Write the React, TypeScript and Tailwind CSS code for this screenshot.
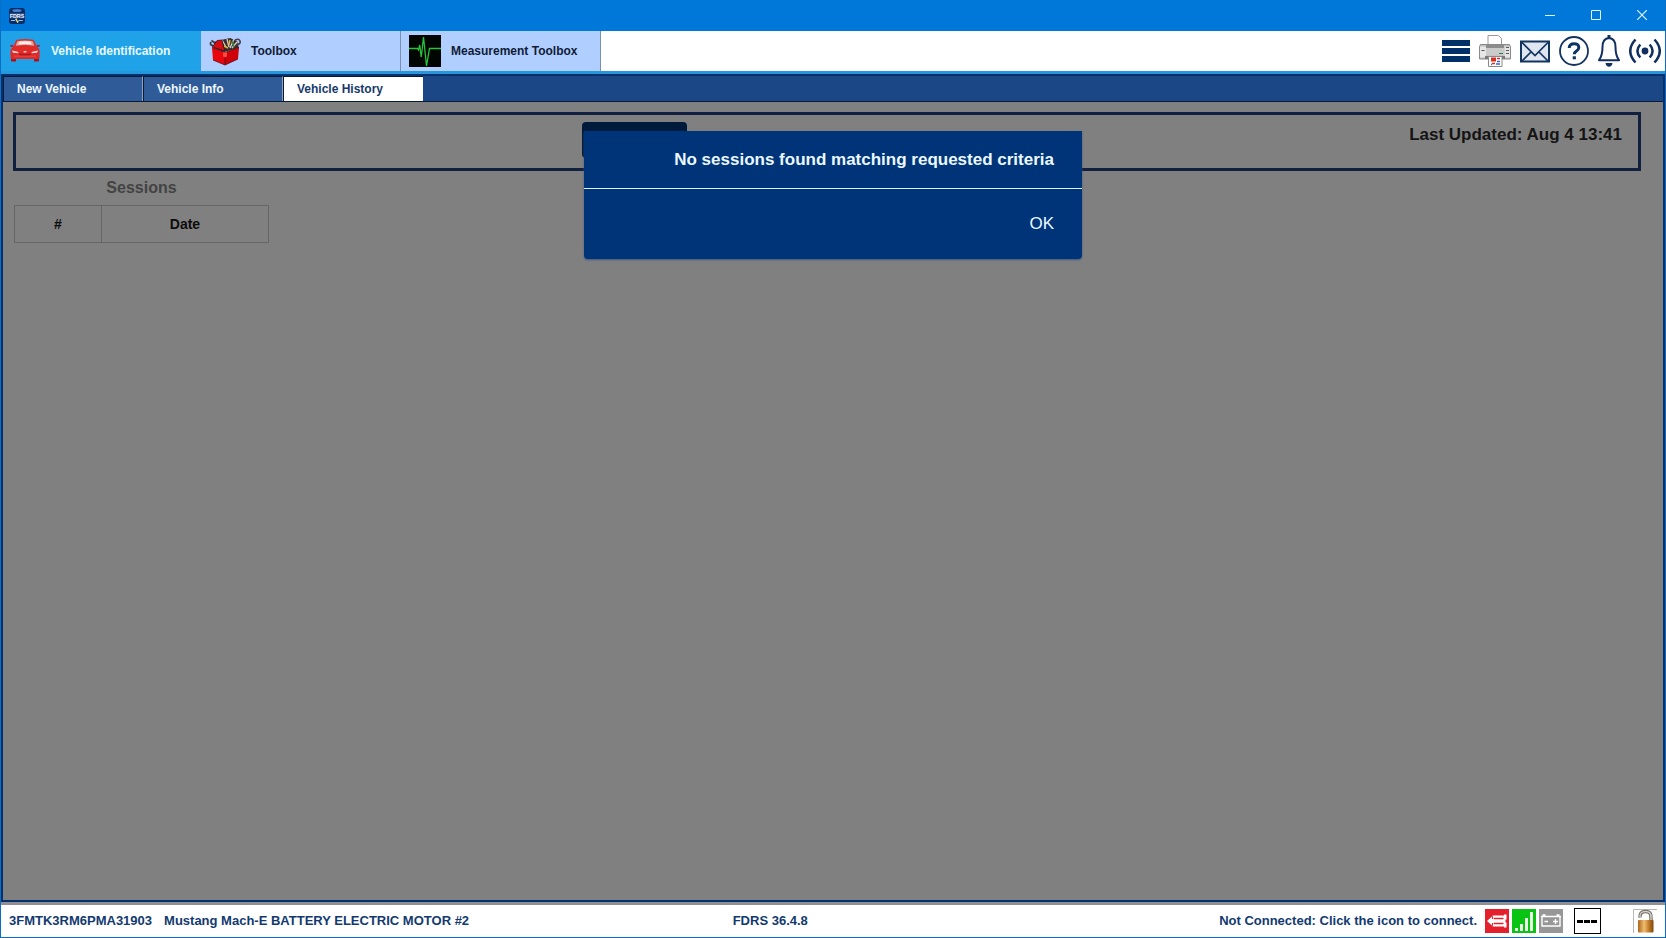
import type { ReactNode } from "react";

function AppLogo() {
  return (
    <svg viewBox="0 0 16 16" className="h-4 w-4" aria-hidden="true">
      <rect x="0" y="0" width="16" height="16" rx="3" fill="#0d2c63" />
      <ellipse cx="8" cy="2.6" rx="4.6" ry="1.5" fill="#3f7fd0" />
      <rect x="1" y="5.2" width="14" height="5" fill="#38538c" />
      <text x="8" y="9.6" textAnchor="middle" fontFamily="Liberation Sans" fontWeight="700" fontSize="5.4" fill="#e8f2ff">
        FDRS
      </text>
      <path d="M2 12.5h4l1.2-1.8 1.4 4 1.2-2.2h4" fill="none" stroke="#9fd4f5" strokeWidth="0.9" />
      <path d="M7.2 10.8l1.4 3.8" stroke="#ffe14a" strokeWidth="1.1" />
    </svg>
  );
}

function CarIcon() {
  return (
    <svg viewBox="0 0 32 32" className="h-8 w-8" aria-hidden="true">
      <path d="M2 23h5v3.400H3q-1 0-1-1zM25 23h5v2.400q0 1-1 1h-4z" fill="#a5141a" />
      <path d="M8.200 4.800Q16 3.400 23.800 4.800q1.200.3 1.800 1.800l2 5.200q3 1.600 3 4.200v6.500q0 1.500-1.500 1.500H3q-1.500 0-1.500-1.500V16q0-2.600 3-4.200l2-5.200q.5-1.500 1.700-1.800z" fill="#df2a27" />
      <path d="M1 10.200l3-.4.8 2-3 .2zM31 10.200l-3-.4-.8 2 3 .2z" fill="#c9181c" />
      <path d="M9.200 6q6.800-1 13.600 0 .8.200 1.200 1l1.300 3.800q-9.300-1.400-18.600 0L8 7q.4-.8 1.200-1z" fill="#d9a9a2" />
      <path d="M10.500 6.600q5.500-.7 11 0l1.200 2.800q-6.700-.6-13.400 0z" fill="#f6ece9" />
      <path d="M3 15.500l5.600 1.300q1 .4 1 1.400l-5.600-.5zM29 15.500l-5.600 1.300q-1 .4-1 1.400l5.600-.5z" fill="#f5d7d8" />
      <path d="M9.500 18.200q6.500 1.400 13 0l-1.500 2.200H11z" fill="#b0181c" />
      <ellipse cx="16" cy="16.800" rx="1.700" ry=".8" fill="#f3dada" />
      <path d="M5 21.200h22" stroke="#e8504c" strokeWidth=".8" />
    </svg>
  );
}

function ToolboxIcon() {
  return (
    <svg viewBox="0 0 32 32" className="h-8 w-8" aria-hidden="true">
      <path d="M5 7l7-2 9-2 7 3 2 7-15 4-10-4z" fill="#3b2a25" />
      <path d="M2 7q-1.500 3 1.500 3.500L9 13M2.500 5.500L6 8" fill="none" stroke="#3c3c46" strokeWidth="1.800" />
      <path d="M13 5l4 7M18 4l2 8M25 4l-4 9M28 7l-5 6" stroke="#c9ccd0" strokeWidth="1.400" />
      <path d="M15 11l4 2M21 5l-1 5" stroke="#e0b13a" strokeWidth="1.400" />
      <path d="M26 5q4-2 5 1t-3 3.500" fill="none" stroke="#4b4048" strokeWidth="1.600" />
      <path d="M23 6l2 6" stroke="#3d8a49" strokeWidth="1.500" />
      <path d="M3.500 12L8 5.500l5-.5 1.500 7 1.500 4z" fill="#d90c13" stroke="#2b1414" strokeWidth=".7" />
      <path d="M3 12.500L16 17.500V30L4 25z" fill="#e8060c" />
      <path d="M16 17.500L30 12.500 29 24 16 30z" fill="#cf0009" />
      <path d="M3 12.500L16 17.500 30 12.500M16 17.500V30M4 25l12 5 13-6" fill="none" stroke="#571013" strokeWidth=".8" />
      <path d="M14 17.500l4-.3v4l-2 1.200-2-1z" fill="#ff4a42" />
    </svg>
  );
}

function PulseIcon() {
  return (
    <svg viewBox="0 0 32 32" className="h-8 w-8" aria-hidden="true">
      <rect width="32" height="32" fill="#020603" />
      <path d="M0 13.500h8.500l1 1.500 1.200-5 1.500 12 1-8L14.500 2l3 29 3-17.500H32" fill="none" stroke="#26c43a" strokeWidth="1.300" />
    </svg>
  );
}

function MenuIcon() {
  return (
    <svg viewBox="0 0 28 32" className="h-8 w-7" aria-hidden="true">
      <path d="M0 5h28v6H0zM0 13h28v6H0zM0 21h28v6H0z" fill="#003068" />
    </svg>
  );
}

function PrinterIcon() {
  return (
    <svg viewBox="0 0 32 32" className="h-8 w-8" aria-hidden="true">
      <path d="M9 11V.5h10.500l3 3V11z" fill="#fdfdfd" stroke="#9a9a9a" />
      <path d="M1.500 9.500h29l1 2V24H.5V11.500z" fill="#bdbdbd" stroke="#8a8a8a" />
      <path d="M7 10h18v3H7z" fill="#8c8c8c" />
      <path d="M7 13h18v7.500H7z" fill="#cbcbcb" />
      <path d="M1 11.500h6v11H1zM25.500 11.500h5.500v11h-5.500z" fill="#e6e6e6" />
      <path d="M2.500 15.500h3M27 12.500h3M27 15.500h3M27 18.500h3" stroke="#555" />
      <path d="M20 18.500h4" stroke="#2f7f57" />
      <path d="M6 21h20v3H6z" fill="#7a7a7a" />
      <path d="M9.500 21.500h13.500v10H9.500z" fill="#fff" stroke="#8a8a8a" />
      <path d="M12 22.500h5v4h-5z" fill="#d5301f" />
      <path d="M18 23.500h3M13 28.500h3" stroke="#d5301f" strokeWidth="1.500" />
      <path d="M18 26.500h3M17 29h4M12 29.500h1" stroke="#3d61c4" strokeWidth="1.500" />
    </svg>
  );
}

function MailIcon() {
  return (
    <svg viewBox="0 0 30 32" className="h-8 w-[30px]" aria-hidden="true">
      <path d="M1 6.500h28v20H1z" fill="#dfe6f2" stroke="#12355f" strokeWidth="2" />
      <path d="M1.500 7L15 20.500 28.500 7M1.500 26.500l10-10M28.500 26.500l-10-10" fill="none" stroke="#12355f" strokeWidth="1.700" />
    </svg>
  );
}

function HelpIcon() {
  return (
    <svg viewBox="0 0 30 32" className="h-8 w-[30px]" aria-hidden="true">
      <circle cx="15" cy="16" r="14" fill="#fff" stroke="#12335f" strokeWidth="1.800" />
      <path d="M10.200 13q.2-4.300 4.900-4.300t4.700 3.900q0 2-2.300 3.500-2.200 1.400-2.200 3.200" fill="none" stroke="#0c3564" strokeWidth="3" />
      <path d="M13.700 21.300h3.200v3h-3.200z" fill="#0c3564" />
    </svg>
  );
}

function BellIcon() {
  return (
    <svg viewBox="0 0 22 32" className="h-8 w-[22px]" aria-hidden="true">
      <path d="M11 3q6.500.5 6.500 9 0 8.500 3.500 13.200H1Q4.500 20.500 4.500 12q0-8.500 6.500-9z" fill="#fff" stroke="#12305f" strokeWidth="2" strokeLinejoin="round" />
      <path d="M9.500 0h3v4h-3zM7.500 28h7q-.6 3.800-3.500 3.800T7.500 28z" fill="#12305f" />
    </svg>
  );
}

function BroadcastIcon() {
  return (
    <svg viewBox="0 0 32 32" className="h-8 w-8" aria-hidden="true">
      <circle cx="16" cy="16" r="3.400" fill="#12305f" />
      <path d="M11.300 9.500q-5.800 6.500 0 13M20.700 9.500q5.800 6.500 0 13M6.500 4.500q-10.500 11.500 0 23M25.500 4.500q10.500 11.500 0 23" fill="none" stroke="#12305f" strokeWidth="2.500" />
    </svg>
  );
}

function ConnectorIcon() {
  return (
    <svg viewBox="0 0 24 24" className="h-6 w-6" aria-hidden="true">
      <rect width="24" height="24" fill="#e3202b" />
      <path d="M2 12L7 7.500V10H8.500L7.500 6.500H19v-1h2.500v5h-1v3h1v5H19v-1H7.500L8.500 14H7v2.500z" fill="#fff" />
      <path d="M9 9.500h9.500M9 14.500h9.500" stroke="#e3202b" strokeWidth="1.400" />
    </svg>
  );
}

function SignalIcon() {
  return (
    <svg viewBox="0 0 24 24" className="h-6 w-6" aria-hidden="true">
      <rect width="24" height="24" fill="#0ac414" />
      <path d="M3 19h3v3H3zM8 15h3v7H8zM13 9h3v13h-3zM18 3h3v19h-3z" fill="#eafbe6" />
    </svg>
  );
}

function BatteryIcon() {
  return (
    <svg viewBox="0 0 24 24" className="h-6 w-6" aria-hidden="true">
      <rect width="24" height="24" fill="#979797" />
      <path d="M2 7.500h20M3 7.500v9.500h18V7.500M3.500 6h3M17.500 6h3" fill="none" stroke="#fff" strokeWidth="1.400" />
      <path d="M5.500 12.500h3.500M14 12.500h5M16.500 10v5" stroke="#fff" strokeWidth="1.300" />
    </svg>
  );
}

function PadlockIcon() {
  return (
    <svg viewBox="0 0 24 24" className="h-6 w-6" aria-hidden="true">
      <path d="M.5 24V.5H24" fill="none" stroke="#b9b9b9" />
      <path d="M7 8.500q-.5-6 5.500-6T18 8.500V12" fill="none" stroke="#6e6a62" strokeWidth="3.400" />
      <path d="M7 8q-.5-5.500 5.500-5.500T18 8.500V12" fill="none" stroke="#d8d4c8" strokeWidth="1.400" />
      <defs>
        <linearGradient id="brass">
          <stop offset="0" stopColor="#a9661b" />
          <stop offset=".4" stopColor="#f0bd70" />
          <stop offset=".7" stopColor="#c07a26" />
          <stop offset="1" stopColor="#7e4610" />
        </linearGradient>
      </defs>
      <rect x="5" y="11" width="15.500" height="12.500" rx="1" fill="url(#brass)" />
    </svg>
  );
}

function MainTab({ icon, label, active = false }: { icon: ReactNode; label: string; active?: boolean }) {
  return (
    <button
      type="button"
      role="tab"
      aria-selected={active}
      className={
        "flex w-[200px] items-center gap-2.5 pl-2 text-xs font-bold " +
        (active ? "bg-[#20a2e8] text-[#e6f8ff]" : "border-r border-[#7b8fae] bg-[#b0ceff] text-[#101c36]")
      }
    >
      {icon}
      {label}
    </button>
  );
}

function SubTab({ label, active = false }: { label: string; active?: boolean }) {
  return (
    <button
      type="button"
      role="tab"
      aria-selected={active}
      className={
        "w-[140px] border-l border-t border-l-[#0a1b38] border-t-[#0a1b38] pl-[13px] text-left text-xs font-bold " +
        (active ? "bg-white text-[#173a6b]" : "border-r border-r-[#8fa3bf] bg-[#2f5c98] text-[#eef6ff]")
      }
    >
      {label}
    </button>
  );
}

const tools = [
  { label: "Menu", icon: <MenuIcon /> },
  { label: "Print", icon: <PrinterIcon /> },
  { label: "Messages", icon: <MailIcon /> },
  { label: "Help", icon: <HelpIcon /> },
  { label: "Notifications", icon: <BellIcon /> },
  { label: "Connection", icon: <BroadcastIcon /> },
];

export default function App() {
  return (
    <div className="flex min-h-screen flex-col border-x border-b border-[#0a6fc4] bg-white font-['Liberation_Sans',Arial,sans-serif]">
      <header className="flex h-[31px] shrink-0 items-center justify-between bg-[#0078d9] pl-2">
        <AppLogo />
        <div className="flex h-[30px] self-start text-[#e2f5ff]">
          <button type="button" aria-label="Minimize" className="flex w-[46px] items-center justify-center">
            <svg viewBox="0 0 10 10" className="h-2.5 w-2.5"><path d="M0 5.500h10" stroke="currentColor" /></svg>
          </button>
          <button type="button" aria-label="Maximize" className="flex w-[46px] items-center justify-center">
            <svg viewBox="0 0 10 10" className="h-2.5 w-2.5"><path d="M.5.5h9v9h-9z" fill="none" stroke="currentColor" /></svg>
          </button>
          <button type="button" aria-label="Close" className="flex w-[46px] items-center justify-center">
            <svg viewBox="0 0 10 10" className="h-2.5 w-2.5"><path d="M0 0l10 10M10 0L0 10" stroke="currentColor" strokeWidth="1.200" /></svg>
          </button>
        </div>
      </header>

      <div className="flex h-[43px] shrink-0 justify-between border-b-[3px] border-[#2797dc] bg-white">
        <nav role="tablist" aria-label="Main" className="flex">
          <MainTab icon={<CarIcon />} label="Vehicle Identification" active />
          <MainTab icon={<ToolboxIcon />} label="Toolbox" />
          <MainTab icon={<PulseIcon />} label="Measurement Toolbox" />
        </nav>
        <div className="flex items-center gap-[9px] pr-1">
          {tools.map((tool) => (
            <button key={tool.label} type="button" aria-label={tool.label}>
              {tool.icon}
            </button>
          ))}
        </div>
      </div>

      <div className="flex grow flex-col border-2 border-[#04316e] bg-[#808080]">
        <nav role="tablist" aria-label="Vehicle" className="flex h-[26px] shrink-0 border-b border-[#0a1b38] bg-[#1c4787]">
          <SubTab label="New Vehicle" />
          <SubTab label="Vehicle Info" />
          <SubTab label="Vehicle History" active />
        </nav>

        <main className="relative grow pl-2.5 pr-[22px] pt-2.5">
          <section className="flex h-[59px] border-[3px] border-[#11203f] px-4 pt-[7px]">
            <div className="w-[34.6%]" />
            <button type="button" aria-label="Refresh" className="h-9 w-[105px] rounded bg-[#001a3c]" />
            <p className="flex-1 text-right text-[17px] font-bold leading-[26px] text-[#141414]">Last Updated: Aug 4 13:41</p>
          </section>

          <table className="ml-px mt-[5px] w-[255px] border-collapse text-sm text-[#0c0c0c]">
            <caption className="pb-[5px] text-base font-bold text-[#434343]">Sessions</caption>
            <thead>
              <tr className="h-[37px]">
                <th scope="col" className="w-[87px] border border-[#666666]">#</th>
                <th scope="col" className="border border-[#666666]">Date</th>
              </tr>
            </thead>
          </table>

          <div
            role="dialog"
            aria-labelledby="dialog-title"
            className="absolute left-1/2 top-[29px] w-[498px] -translate-x-1/2 rounded-b bg-[#003478] text-right text-[17px] text-[#eaf8ff] shadow-[0_1px_2px_#3d5a80]"
          >
            <h2 id="dialog-title" className="border-b border-[#dcf1fb] px-7 py-4 font-bold leading-[25px]">
              No sessions found matching requested criteria
            </h2>
            <div className="flex h-[70px] items-center justify-end px-7">
              <button type="button" className="leading-[26px]">OK</button>
            </div>
          </div>
        </main>
      </div>

      <footer className="grid h-[35px] shrink-0 grid-cols-[43.7%_1fr_auto] items-center border-t-[3px] border-[#8f8f94] bg-white pl-2 text-[13px] font-bold leading-5 text-[#123a70]">
        <div className="flex gap-3">
          <span>3FMTK3RM6PMA31903</span>
          <span>Mustang Mach-E BATTERY ELECTRIC MOTOR #2</span>
        </div>
        <span>FDRS 36.4.8</span>
        <div className="flex items-center pr-2">
          <span className="mr-2">Not Connected: Click the icon to connect.</span>
          <div className="flex gap-[3px]">
            <button type="button" aria-label="Connect vehicle"><ConnectorIcon /></button>
            <button type="button" aria-label="Signal strength"><SignalIcon /></button>
            <button type="button" aria-label="Battery"><BatteryIcon /></button>
          </div>
          <div className="ml-[11px] flex h-[26px] w-[27px] items-center justify-center border border-black">
            <svg viewBox="0 0 21 3" className="h-[3px] w-[21px]" role="img" aria-label="Voltage unavailable">
              <path d="M0 0h6v3H0zM7 0h6v3H7zM14 0h6v3h-6z" fill="#000" />
            </svg>
          </div>
          <button type="button" aria-label="Unlock" className="ml-8"><PadlockIcon /></button>
        </div>
      </footer>
    </div>
  );
}
